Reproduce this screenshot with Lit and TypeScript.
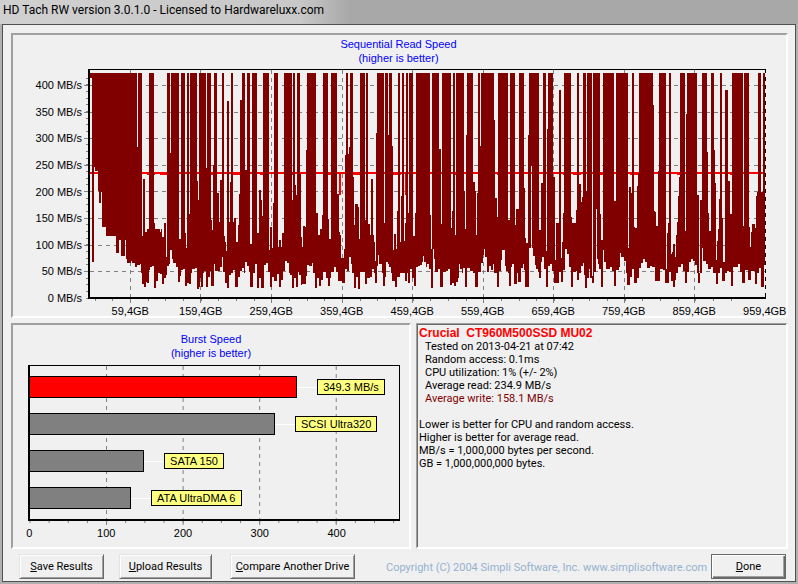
import { LitElement, html, svg, css } from "lit";
import { customElement } from "lit/decorators.js";

// One block of samples: plot offset, then "x:y" steps of the upper and the lower edge.
// F stands for the top of the range. The plot uses three units for each pixel.
type Block = { start: number; end: number; high: string; low: string };

const BLOCKS: Block[] = [
  {
    start: 240,
    end: 510,
    high: "27:F 171:261 174:F 186:527 189:357 195:516 201:508 207:F 222:490 225:508 240:515 243:508 246:530 252:490 258:590 261:F 270:280 273:F 297:537 303:F 315:518 318:563 321:F 327:462 330:F 351:362 354:420 357:F 378:324 381:F 393:480 396:510 399:315 402:F 411:398 417:485 420:360 426:F 432:528 435:545 438:573 441:124 447:485 450:365 453:F 459:487 462:475 468:545 474:495 477:403 480:120 486:F 495:330 501:F",
    low: "27:45 30:55 36:605 42:320 45:332 54:392 57:430 63:395 66:500 78:528 108:578 117:540 123:588 135:540 138:598 141:610 153:603 156:608 165:622 171:615 180:612 183:638 186:672 192:680 198:665 201:668 207:630 210:622 216:618 222:685 228:662 234:640 240:642 246:672 252:655 258:645 261:618 267:612 270:570 276:598 279:610 288:622 294:667 300:648 303:630 309:627 315:677 321:668 327:672 333:640 336:628 345:625 351:688 357:680 360:655 363:680 369:640 372:632 378:680 384:650 390:632 393:677 402:612 405:632 420:620 426:592 429:637 435:670 441:683 447:645 453:640 459:630 465:680 474:650 480:632 486:625 492:640 495:605 501:618 507:635",
  },
  {
    start: 750,
    end: 510,
    high: "0:552 6:F 21:520 27:390 33:420 36:468 39:F 57:570 60:500 66:565 69:430 72:F 84:560 87:540 93:562 96:518 102:F 114:F 126:420 129:F 135:375 138:405 141:F 150:342 153:530 156:562 159:497 165:500 168:270 171:F 198:458 204:525 210:508 216:465 219:F 234:477 237:537 243:F 261:402 267:515 270:525 273:595 282:567 285:285 288:F 294:282 297:262 300:F 309:350 312:495 315:432 324:440 327:537 330:F 345:480 348:F 354:492 360:525 363:357 369:525 372:547 375:602 378:220 381:F 402:490 405:F 414:225 417:F 426:258 429:570 432:522 438:567 441:452 444:F 450:545 453:408 456:F 462:542 465:490 468:F 474:460 477:F 489:528 495:458 498:F",
    low: "0:680 9:638 15:612 21:685 27:655 33:685 42:615 48:610 54:635 60:680 66:652 72:662 81:643 87:680 93:660 99:632 105:603 111:608 117:640 120:645 126:683 132:653 138:680 144:637 147:645 153:675 156:672 168:648 171:615 177:617 186:610 189:640 195:683 201:655 207:677 213:660 219:637 228:655 234:677 240:655 243:635 252:622 258:637 264:662 276:670 285:628 291:632 297:590 303:612 306:640 312:683 318:652 324:688 330:635 345:672 351:655 360:652 366:628 372:640 375:668 381:618 384:585 387:612 396:640 399:678 405:652 408:605 414:612 417:622 423:640 426:662 435:680 441:652 450:638 465:662 471:638 474:668 480:628 486:655 492:677 498:620 504:617",
  },
  {
    start: 1260,
    end: 510,
    high: "0:F 30:465 33:568 36:F 57:267 63:492 66:F 93:505 96:453 99:F 105:525 108:F 132:392 135:508 138:225 141:F 159:365 165:393 168:525 171:400 174:F 180:258 183:F 222:180 225:413 231:472 234:F 264:480 270:F 285:495 288:448 297:F 312:385 315:535 318:550 324:225 327:F 357:510 363:370 369:F 378:573 381:208 384:F 399:350 405:600 408:488 417:90 423:595 426:545 429:458 432:F 453:470 456:488 468:450 471:F 477:373 483:425 486:410 489:F 498:393 501:F",
    low: "0:615 6:605 9:588 12:605 18:620 21:612 27:628 33:683 39:568 42:598 45:635 54:628 60:680 69:635 78:632 84:628 90:675 96:670 102:677 108:665 114:655 117:612 120:628 126:640 129:625 135:680 141:625 150:632 159:640 165:680 174:635 183:610 189:585 192:568 195:590 201:635 207:618 213:630 219:612 222:638 228:640 231:680 237:632 243:600 246:570 255:618 258:632 264:640 267:677 273:620 276:612 282:672 291:640 294:665 303:625 309:612 312:630 315:680 327:565 333:318 336:565 339:588 345:615 348:628 354:635 357:655 363:605 366:592 372:628 378:680 384:618 390:612 396:632 402:670 411:668 417:635 423:665 429:630 435:568 441:582 447:620 453:680 459:635 468:632 471:660 477:640 483:618 489:608 492:645 495:685 501:655 507:628",
  },
  {
    start: 1770,
    end: 526,
    high: "0:F 6:648 9:F 30:462 33:540 39:F 72:423 78:F 114:565 117:380 123:400 126:F 132:500 135:503 141:378 144:340 147:F 189:135 192:452 195:457 198:497 204:333 207:F 228:628 231:520 234:490 237:F 243:582 246:575 249:552 255:590 258:525 261:485 264:408 267:350 270:F 285:513 288:162 291:F 321:405 327:640 330:420 336:F 351:275 354:460 357:513 363:F 372:270 375:370 378:600 381:543 384:508 387:417 390:F 396:475 399:605 405:90 414:363 420:463 426:F 459:498 462:F 477:500 480:560 483:515 486:493 495:503 498:408 501:395 504:F 513:395 519:F",
    low: "0:655 6:668 12:635 18:447 21:598 24:612 27:627 33:680 39:570 42:605 48:628 60:622 66:632 72:677 78:630 87:620 90:580 93:592 102:602 108:640 111:675 120:650 126:627 132:668 141:655 147:625 153:610 159:597 165:605 171:625 180:618 186:620 195:662 210:627 219:630 225:668 237:635 243:663 249:680 255:660 258:640 264:620 273:612 279:632 285:670 291:635 297:605 303:598 309:602 315:615 321:638 324:668 330:640 336:565 339:602 348:612 354:628 363:620 369:638 378:672 384:640 390:625 396:662 405:640 411:632 417:635 423:677 429:622 444:612 450:635 456:670 465:630 474:660 483:632 495:672 501:640 507:625 513:680 522:615",
  },
];

const PEAK = 38;

const steps = (src: string, end: number): number[][] => {
  const points = src.split(" ").map((p) => {
    const [x, y] = p.split(":");
    return [Number(x), y === "F" ? PEAK : Number(y)];
  });
  return points.map(([x, y], i) => [x, i + 1 < points.length ? points[i + 1][0] : end, y]);
};

const blockPath = (b: Block): string => {
  const upper = steps(b.high, b.end).flatMap(([x, next, y]) => [[x, y], [next, y]]);
  const lower = steps(b.low, b.end).flatMap(([x, next, y]) => [[next, y], [x, y]].reverse()).reverse();
  return "M" + [...upper, ...lower].map(([x, y]) => `${x + b.start} ${y}`).join("L") + "Z";
};

const GRID_X = [391, 601, 814, 1027, 1237, 1450, 1660, 1873, 2083];
const GRID_Y = [76, 157, 235, 316, 394, 475, 556, 634];
const Y_LABELS = [400, 350, 300, 250, 200, 150, 100, 50, 0];
const X_LABELS = [59, 159, 259, 359, 459, 559, 659, 759, 859, 959];
const WOBBLES = [300, 440, 480, 620, 700, 780, 860, 980, 1060, 1180, 1300, 1360, 1490, 1690, 1720, 1800, 1890, 2030, 2190];

@customElement("read-chart")
export class ReadChart extends LitElement {
  static styles = css`
    :host { display: block; font: 11px/14px "Liberation Sans", Arial, sans-serif; color: #000; }
    .title { text-align: center; color: #00f; margin: 0 0 4px; padding-right: 2px; font-weight: 400; font-size: 11px; }
    .row { display: flex; }
    .scale { width: 69px; height: 227px; margin-top: 9px; display: flex; flex-direction: column; justify-content: space-between; text-align: right; flex: none; }
    .plot { flex: 1; min-width: 0; margin: 0 20px 0 6px; }
    svg { display: block; width: 100%; height: 230px; overflow: visible; }
    .labels { display: grid; grid-template-columns: repeat(10, 1fr); text-align: center; margin: 5px -34px 0 7px; }
    .grid { stroke: #808080; stroke-dasharray: 4 4; }
    .tick { stroke: #808080; }
    .axis { stroke: #000; stroke-width: 2px; }
    .edge { stroke: #000; }
    .write { fill: #800000; }
    .read { stroke: #f00; stroke-width: 2px; fill: none; }
    line, polyline { vector-effect: non-scaling-stroke; }
  `;

  render() {
    const xTicks = Array.from({ length: 37 }, (_, i) => 285 + i * 53);
    const yTicks = Array.from({ length: 34 }, (_, i) => 714 - i * 20);
    return html`
      <h2 class="title">Sequential Read Speed<br />(higher is better)</h2>
      <div class="row">
        <div class="scale">${Y_LABELS.map((v) => html`<span>${v} MB/s</span>`)}</div>
        <div class="plot">
          <svg viewBox="264 27 2034 690" preserveAspectRatio="none" shape-rendering="crispEdges" role="img" aria-label="Sequential speed over disk position">
            ${GRID_X.map((x) => svg`<line class="grid" x1=${x} x2=${x} y1="30" y2="714"/><line class="tick" x1=${x} x2=${x} y1="717" y2="729"/>`)}
            ${GRID_Y.map((y) => svg`<line class="grid" x1="270" x2="2296" y1=${y} y2=${y}/><line class="tick" x1="252" x2="266" y1=${y} y2=${y}/>`)}
            ${xTicks.map((x) => svg`<line class="tick" x1=${x} x2=${x} y1="717" y2="723"/>`)}
            ${yTicks.map((y) => svg`<line class="tick" x1="258" x2="266" y1=${y} y2=${y}/>`)}
            <line class="read" x1="267" x2="2296" y1="339" y2="339"/>
            ${WOBBLES.map((x) => svg`<line class="read" x1=${x} x2=${x + 24} y1="342" y2="342"/>`)}
            <polyline class="read" points="1020,339 1020,405"/>
            <polyline class="read" points="1217,339 1217,405"/>
            ${BLOCKS.map((b) => svg`<path class="write" d=${blockPath(b)}/>`)}
            <line class="edge" x1="264" x2="2296" y1="28" y2="28"/>
            <line class="grid edge" x1="2296" x2="2296" y1="28" y2="714"/>
            <line class="axis" x1="267" x2="267" y1="27" y2="717"/>
            <line class="axis" x1="264" x2="2298" y1="714" y2="714"/>
          </svg>
          <div class="labels">${X_LABELS.map((v) => html`<span>${v},4GB</span>`)}</div>
        </div>
      </div>
    `;
  }
}

const BURST = [
  { label: "349.3 MB/s", value: 349, own: true },
  { label: "SCSI Ultra320", value: 320, own: false },
  { label: "SATA 150", value: 149, own: false },
  { label: "ATA UltraDMA 6", value: 132, own: false },
];
const BURST_MAX = 482;

@customElement("burst-chart")
export class BurstChart extends LitElement {
  static styles = css`
    :host { display: block; font: 11px/15px "Liberation Sans", Arial, sans-serif; color: #000; }
    .title { text-align: center; color: #00f; margin: 0 0 5px; font-weight: 400; font-size: 11px; line-height: 14px; }
    .plot { display: grid; margin: 0 9px 0 15px; border: 1px solid #000; border-width: 1px 1px 2px 2px; height: 153px; }
    svg, .bars { grid-area: 1 / 1; }
    svg { width: 100%; height: 153px; overflow: visible; display: block; }
    .grid { stroke: #808080; stroke-dasharray: 4 4; }
    .tick { stroke: #808080; }
    line { vector-effect: non-scaling-stroke; }
    .bars { display: flex; flex-direction: column; gap: 15px; padding-top: 10px; z-index: 1; }
    .bar-row { display: flex; align-items: center; height: 22px; }
    .bar { box-sizing: border-box; height: 22px; border: 1px solid #000; border-left: 0; background: #808080; flex: none; }
    .bar.own { background: #f00; }
    .link { width: 20px; height: 1px; background: #fff; flex: none; }
    .tag { box-sizing: border-box; height: 16px; border: 1px solid #000; background: #ffff80; padding: 0 5px; white-space: nowrap; }
    .labels { display: grid; grid-template-columns: repeat(5, 1fr); text-align: center; margin: 5px 34px 0 -22px; }
  `;

  render() {
    const ticks = Array.from({ length: 20 }, (_, i) => i * 25);
    return html`
      <h2 class="title">Burst Speed<br />(higher is better)</h2>
      <div class="plot">
        <svg viewBox="0 0 482 153" preserveAspectRatio="none" shape-rendering="crispEdges" aria-hidden="true">
          ${[100, 200, 300, 400].map((x) => svg`<line class="grid" x1=${x} x2=${x} y1="0" y2="153"/><line class="tick" x1=${x} x2=${x} y1="155" y2="159"/>`)}
          ${ticks.map((x) => svg`<line class="tick" x1=${x} x2=${x} y1="155" y2="157"/>`)}
        </svg>
        <div class="bars">
          ${BURST.map(
            (b) => html`<div class="bar-row">
              <div class="bar ${b.own ? "own" : ""}" style="width:${(b.value / BURST_MAX) * 100}%"></div>
              <div class="link"></div>
              <div class="tag">${b.label}</div>
            </div>`
          )}
        </div>
      </div>
      <div class="labels">${[0, 100, 200, 300, 400].map((v) => html`<span>${v}</span>`)}</div>
    `;
  }
}

@customElement("app-root")
export class AppRoot extends LitElement {
  static styles = css`
    :host {
      display: flex; flex-direction: column; box-sizing: border-box; min-height: 100vh;
      background: #b0b0b0; padding: 0 2px 2px; font: 11px/13px Roboto, "Liberation Sans", sans-serif; color: #000;
    }
    .titlebar {
      margin: 0 -2px; padding: 0 3px; height: 24px; font: 12px/20px Roboto, "Open Sans", sans-serif;
      background: linear-gradient(90deg, #d0d0d0 0, #c8c8c8 300px, #a8a8a8 350px, #a8a8a8 100%);
    }
    .client {
      flex: 1; background: #f0f0f0; border: 1px solid #505050; box-sizing: border-box;
      padding: 8px 7px 1px 8px; display: flex; flex-direction: column; gap: 5px;
    }
    .panel { border: 2px solid; border-color: #a0a0a0 #fff #fff #a0a0a0; box-sizing: border-box; }
    .read { height: 285px; padding-top: 2px; }
    .lower { display: grid; grid-template-columns: 400fr 372fr; gap: 5px; height: 226px; }
    .burst { padding-top: 7px; min-width: 0; }
    .info { border-width: 1px 2px 2px 1px; padding: 1px 2px; box-shadow: inset 1px 1px #696969; white-space: pre-wrap; min-width: 0; }
    .info p { margin: 0; }
    .info .drive { margin: 2px 0 0; font: 700 12px/13px "Liberation Sans", Arial, sans-serif; color: #f00; }
    .info .detail { padding-left: 6px; }
    .info .write { color: #800000; }
    .info .notes { margin-top: 13px; }
    .footer { display: flex; align-items: center; padding: 0 2px 0 8px; }
    button {
      box-sizing: border-box; height: 25px; padding: 0; background: #f0f0f0; color: #000; border: 1px solid;
      border-color: #e3e3e3 #696969 #696969 #e3e3e3; box-shadow: inset 1px 1px #fff, inset -1px -1px #a0a0a0;
      font: 11px/14px Roboto, "Liberation Sans", sans-serif; white-space: nowrap; flex: none;
    }
    .save { width: 85px; margin-right: 15px; }
    .upload { width: 93px; margin-right: 18px; }
    .compare { width: 125px; }
    .done { width: 75px; border-color: #696969; box-shadow: inset 1px 1px #fff, inset -1px -1px #696969, inset -2px -2px #a0a0a0; }
    .copyright { flex: 1; min-width: 0; padding: 2px 0 0 31px; color: #96b0cf; line-height: 14px; white-space: nowrap; }
  `;

  render() {
    return html`
      <header class="titlebar">HD Tach RW version 3.0.1.0 - Licensed to Hardwareluxx.com</header>
      <main class="client">
        <section class="panel read"><read-chart></read-chart></section>
        <div class="lower">
          <section class="panel burst"><burst-chart></burst-chart></section>
          <section class="panel info"><h2 class="drive">Crucial  CT960M500SSD MU02</h2><p class="detail">Tested on 2013-04-21 at 07:42</p><p class="detail">Random access: 0.1ms</p><p class="detail">CPU utilization: 1% (+/- 2%)</p><p class="detail">Average read: 234.9 MB/s</p><p class="detail write">Average write: 158.1 MB/s</p><p class="notes">Lower is better for CPU and random access.</p><p>Higher is better for average read.</p><p>MB/s = 1,000,000 bytes per second.</p><p>GB = 1,000,000,000 bytes.</p></section>
        </div>
        <footer class="footer">
          <button class="save"><u>S</u>ave Results</button>
          <button class="upload"><u>U</u>pload Results</button>
          <button class="compare"><u>C</u>ompare Another Drive</button>
          <span class="copyright">Copyright (C) 2004 Simpli Software, Inc. www.simplisoftware.com</span>
          <button class="done"><u>D</u>one</button>
        </footer>
      </main>
    `;
  }
}
